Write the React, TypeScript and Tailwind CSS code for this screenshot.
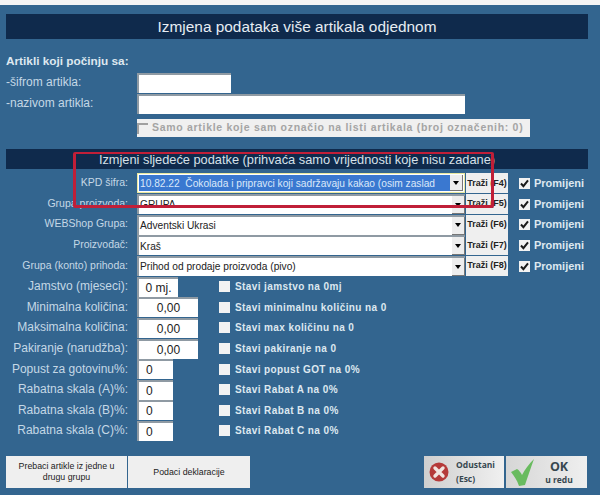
const arial = "font-['Liberation_Sans',Arial,sans-serif]";
const bold = "font-['Liberation_Sans',Arial,sans-serif] font-bold";
const bevel = "border-t-2 border-l-2 border-t-[#8f9aa3] border-l-[#8f9aa3] bg-white";

function Check({ on }: { on?: boolean }) {
  return (
    <span className="flex h-[11px] w-[11px] shrink-0 items-center justify-center bg-[#f2f2f2]">
      {on && (
        <svg viewBox="0 0 11 11" className="h-[11px] w-[11px]">
          <path d="M2 5.5 L4.4 8.2 L9 2.4" fill="none" stroke="#1a1a1a" strokeWidth="2" />
        </svg>
      )}
    </span>
  );
}

function SelectRow({ label, value, fkey, active }: { label: string; value: string; fkey: string; active?: boolean }) {
  return (
    <div className="flex h-[20.7px] items-center">
      <div className="w-[122px] pb-[1px] text-right text-[10.5px] text-[#c5d8e6]">{label}</div>
      <div className={`ml-[9px] flex h-[20px] w-[328px] items-center justify-between ${active ? "border border-[#e9e8a0] bg-white p-[1px]" : bevel}`}>
        <span className={`flex h-full min-w-0 flex-1 items-center overflow-hidden whitespace-pre pl-[1px] text-[10.2px] ${active ? "bg-[#3a78d0] text-[#dbe8fa]" : "text-[#222]"}`}>{value}</span>
        <span className="flex h-full w-[13px] shrink-0 items-center justify-center border-b border-r border-[#777] bg-[#eeeeee]">
          <span className="h-0 w-0 border-x-[3px] border-t-[4px] border-x-transparent border-t-black" />
        </span>
      </div>
      <div className={`ml-[1px] flex h-[20px] w-[42px] items-center justify-center whitespace-nowrap bg-[#efefef] text-[9px] text-[#222] ${bold}`}>Traži ({fkey})</div>
      <div className="ml-[11px]"><Check on /></div>
      <span className={`ml-[4px] text-[11px] text-[#dde8f0] ${bold}`}>Promijeni</span>
    </div>
  );
}

function ValueRow({ label, value, w, center, stavi }: { label: string; value: string; w: string; center?: boolean; stavi: string }) {
  return (
    <div className="flex h-[20.6px] items-center">
      <div className="w-[122px] pb-[1px] text-right text-[12px] text-[#c5d8e6]">{label}</div>
      <div className={`ml-[9px] flex h-[20px] items-center ${w} ${center ? "justify-center" : "pl-[7px]"} ${bevel} text-[12px] text-[#222]`}>{value}</div>
      <div className="flex-1" />
      <div className="flex w-[369px] items-center">
        <Check />
        <span className={`ml-[5px] text-[10px] tracking-[0.4px] text-[#dde8f0] ${bold}`}>{stavi}</span>
      </div>
    </div>
  );
}

export default function App() {
  const selects = [
    { label: "KPD šifra:", value: "10.82.22  Čokolada i pripravci koji sadržavaju kakao (osim zaslad", fkey: "F4", active: true },
    { label: "Grupa proizvoda:", value: "GRUPA", fkey: "F5" },
    { label: "WEBShop Grupa:", value: "Adventski Ukrasi", fkey: "F6" },
    { label: "Proizvođač:", value: "Kraš", fkey: "F7" },
    { label: "Grupa (konto) prihoda:", value: "Prihod od prodaje proizvoda (pivo)", fkey: "F8" },
  ];
  const values = [
    { label: "Jamstvo (mjeseci):", value: "0 mj.", w: "w-[41px]", center: true, stavi: "Stavi jamstvo na 0mj" },
    { label: "Minimalna količina:", value: "0,00", w: "w-[61px]", center: true, stavi: "Stavi minimalnu količinu na 0" },
    { label: "Maksimalna količina:", value: "0,00", w: "w-[61px]", center: true, stavi: "Stavi max količinu na 0" },
    { label: "Pakiranje (narudžba):", value: "0,00", w: "w-[61px]", center: true, stavi: "Stavi pakiranje na 0" },
    { label: "Popust za gotovinu%:", value: "0", w: "w-[36px]", stavi: "Stavi popust GOT na 0%" },
    { label: "Rabatna skala (A)%:", value: "0", w: "w-[36px]", stavi: "Stavi Rabat A na 0%" },
    { label: "Rabatna skala (B)%:", value: "0", w: "w-[36px]", stavi: "Stavi Rabat B na 0%" },
    { label: "Rabatna skala (C)%:", value: "0", w: "w-[36px]", stavi: "Stavi Rabat C na 0%" },
  ];
  return (
    <div className={`relative h-[495px] w-[600px] overflow-hidden bg-[#33658f] ${arial}`}>
      <div className="h-[5px] bg-[#f4f4f4]" />
      <div className="px-[6px] pt-[9px] pr-[12px]">
        <div className="flex h-[25px] items-center justify-center bg-[#0f2a4c] text-[15.4px] text-[#e6edf3]">
          Izmjena podataka više artikala odjednom
        </div>

        <div className="mt-[15px] text-[11.8px] font-bold leading-[14px] text-[#dfe8ef]">Artikli koji počinju sa:</div>
        <div className="mt-[4px] flex h-[21px] items-center">
          <span className="w-[131px] pb-[2px] text-[12px] text-[#c5d8e6]">-šifrom artikla:</span>
          <div className={`h-[20px] w-[94px] ${bevel}`} />
        </div>
        <div className="flex h-[21px] items-center">
          <span className="w-[131px] pb-[2px] text-[12px] text-[#c5d8e6]">-nazivom artikla:</span>
          <div className={`h-[20px] w-[328px] ${bevel}`} />
        </div>
        <div className="ml-[131px] mt-[5px] flex h-[18px] w-[393px] items-center bg-[#f0f0f0]">
          <span className="h-[11px] w-[11px] border-l-2 border-t-2 border-[#a0a0a0] bg-[#f0f0f0]" />
          <span className={`ml-[4px] whitespace-nowrap text-[10.5px] tracking-[0.7px] text-[#a4a4a4] ${bold}`}>Samo artikle koje sam označio na listi artikala (broj označenih: 0)</span>
        </div>

        <div className="mt-[12px] flex h-[20px] items-center justify-center bg-[#0f2a4c] pt-[1px] text-[12.8px] text-[#d6e0e8]">
          Izmjeni sljedeće podatke (prihvaća samo vrijednosti koje nisu zadane)
        </div>

        <div className="mt-[4px]">
          {selects.map((s) => (
            <SelectRow key={s.fkey} {...s} />
          ))}
        </div>
        <div>
          {values.map((v) => (
            <ValueRow key={v.label} {...v} />
          ))}
        </div>
      </div>

      <div className="mt-[15px] flex justify-between pl-[6px] pr-[13px]">
        <div className="flex h-[32px]">
          <div className="flex w-[121px] items-center justify-center bg-[#efefef] px-[10px] text-center text-[8.8px] leading-[11px] text-[#222]">Prebaci artikle iz jedne u drugu grupu</div>
          <div className="ml-[1px] flex w-[122px] items-center justify-center bg-[#efefef] text-[8.8px] text-[#222]">Podaci deklaracije</div>
        </div>
        <div className="flex h-[32px]">
          <div className="flex w-[80px] items-center bg-gradient-to-r from-[#cfcfcf] to-[#f0f0f0] pl-[5px]">
            <svg viewBox="0 0 20 20" className="h-[20px] w-[20px] shrink-0">
              <circle cx="10" cy="10" r="9.5" fill="#b53a3a" />
              <path d="M6 6 L14 14 M14 6 L6 14" stroke="#f1e4e0" strokeWidth="3.4" strokeLinecap="round" />
            </svg>
            <div className="ml-[7px] font-['Open_Sans',sans-serif] text-[8.5px] font-bold leading-[14px] text-[#37474f]">Odustani<br />(Esc)</div>
          </div>
          <div className="ml-[2px] flex w-[81px] items-center bg-gradient-to-r from-[#d6d6d6] to-[#efefef] pl-[5px]">
            <svg viewBox="0 0 24 27" className="h-[27px] w-[24px] shrink-0">
              <path d="M0 13 L6 10 C8 11 10 14 11 16 C14 10 18 5 23 0 C20 8 17 17 14 26 L8 27 C6 21 3 17 0 13Z" fill="#69bb5f" />
            </svg>
            <div className="ml-[6px] flex flex-1 flex-col items-center pr-[10px] font-['Open_Sans',sans-serif] font-bold text-[#37474f]">
              <span className="text-[12.5px] leading-[15px]">OK</span>
              <span className="text-[8.5px] leading-[12px]">u redu</span>
            </div>
          </div>
        </div>
      </div>

      <div className="absolute left-[73px] top-[152px] h-[56px] w-[421px] rounded-[2px] border-[3px] border-t-2 border-[#c01f38]" />
    </div>
  );
}
